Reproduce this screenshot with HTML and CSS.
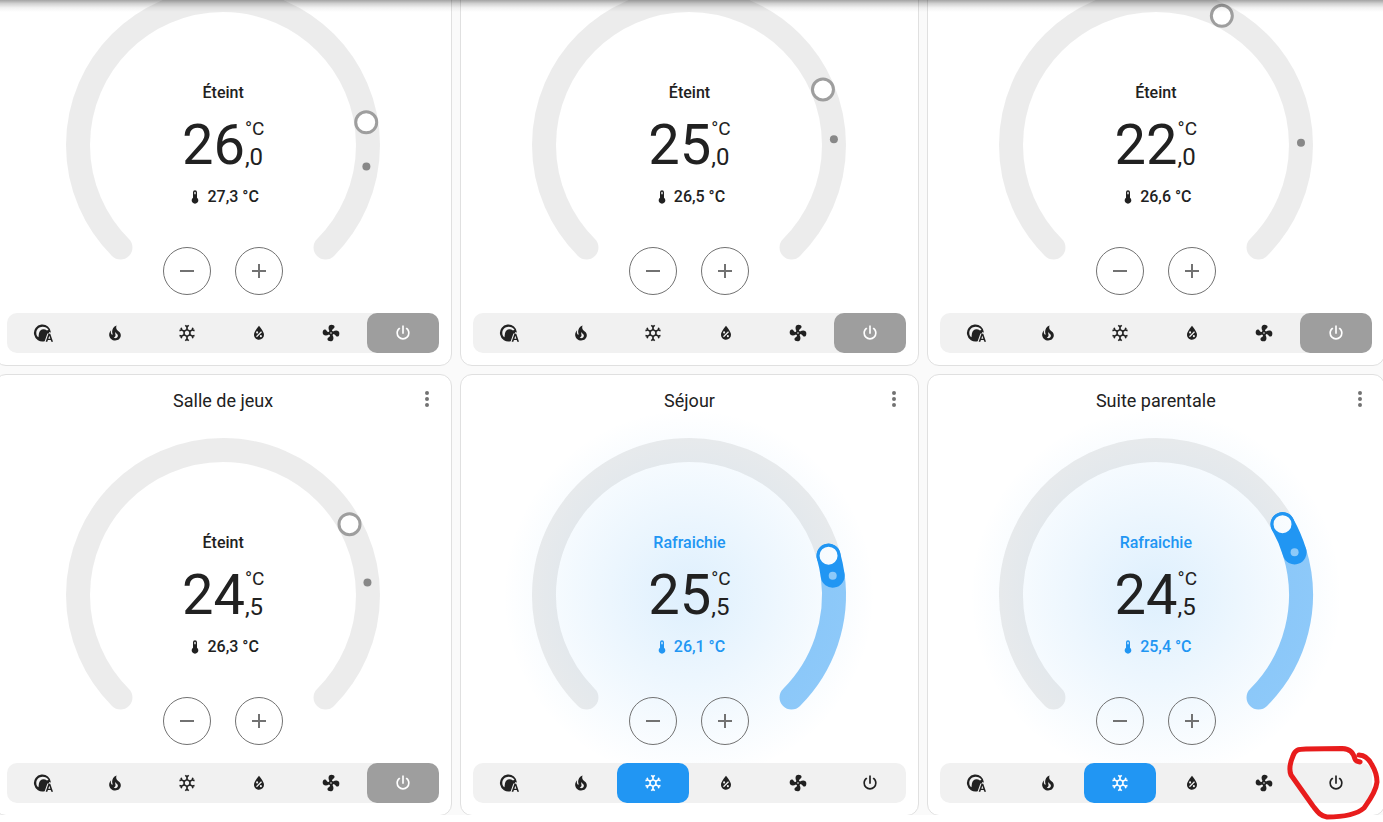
FILE: index.html
```html
<!DOCTYPE html>
<html lang="fr">
<head>
<meta charset="utf-8">
<title>Thermostats</title>
<link rel="stylesheet" href="styles.css">
</head>
<body>
<svg class="sprite" aria-hidden="true">
  <symbol id="auto" viewBox="0 0 24 24"><path fill-rule="evenodd" d="M21.500 11.500A10.200 10.200 0 1 0 14 21.800L17.300 12.500H19.500L19.300 10.800ZM5 16C2 10.500 5.800 4.600 11.500 4.600C14.500 4.600 17.200 6 18.600 8.200L16.800 9C14 7 10.800 7.200 8.900 9C7 11 7 13.500 6.600 17Z"/><path fill-rule="evenodd" d="M18.500 13H20.700L24 22.500H22L21.300 20.500H17.900L17.200 22.500H15.200ZM18.400 18.900H20.800L19.600 15.200Z"/></symbol>
  <symbol id="fire" viewBox="0 0 24 24"><path d="M17.66 11.2C17.43 10.9 17.15 10.64 16.89 10.38C16.22 9.78 15.46 9.35 14.82 8.72C13.33 7.26 13 4.85 13.95 3C13 3.23 12.17 3.75 11.46 4.32C8.87 6.4 7.85 10.07 9.07 13.22C9.11 13.32 9.15 13.42 9.15 13.55C9.15 13.77 9 13.97 8.8 14.05C8.57 14.15 8.33 14.09 8.14 13.93C8.08 13.88 8.04 13.83 8 13.76C6.87 12.33 6.69 10.28 7.45 8.64C5.78 10 4.87 12.3 5 14.47C5.06 14.97 5.12 15.47 5.29 15.97C5.43 16.57 5.7 17.17 6 17.7C7.08 19.43 8.95 20.67 10.96 20.92C13.1 21.19 15.39 20.8 17.03 19.32C18.86 17.66 19.5 15 18.56 12.72L18.43 12.46C18.22 12 17.66 11.2 17.66 11.2M14.5 17.5C14.22 17.74 13.76 18 13.4 18.1C12.28 18.5 11.16 17.94 10.5 17.28C11.69 17 12.4 16.12 12.61 15.23C12.78 14.43 12.46 13.77 12.33 13C12.21 12.26 12.23 11.63 12.5 10.94C12.69 11.32 12.89 11.7 13.13 12C13.9 13 15.11 13.44 15.37 14.8C15.41 14.94 15.43 15.08 15.43 15.23C15.46 16.05 15.1 16.95 14.5 17.5Z"/></symbol>
  <symbol id="snow" viewBox="0 0 24 24"><path d="M20.79,13.95L18.46,14.57L16.46,13.44V10.56L18.46,9.43L20.79,10.05L21.31,8.12L19.54,7.65L20,5.88L18.07,5.36L17.45,7.69L15.45,8.82L13,7.38V5.12L14.71,3.41L13.29,2L12,3.29L10.71,2L9.29,3.41L11,5.12V7.38L8.5,8.82L6.5,7.69L5.92,5.36L4,5.88L4.47,7.65L2.7,8.12L3.22,10.05L5.55,9.43L7.55,10.56V13.45L5.55,14.58L3.22,13.96L2.7,15.89L4.47,16.36L4,18.12L5.93,18.64L6.55,16.31L8.55,15.18L11,16.62V18.88L9.29,20.59L10.71,22L12,20.71L13.29,22L14.7,20.59L13,18.88V16.62L15.5,15.17L17.5,16.3L18.12,18.63L20,18.12L19.53,16.35L21.3,15.88L20.79,13.95M9.5,10.56L12,9.11L14.5,10.56V13.44L12,14.89L9.5,13.44V10.56Z"/></symbol>
  <symbol id="dry" viewBox="0 0 24 24"><path d="M12,3.25C12,3.25 6,10 6,14C6,17.32 8.69,20 12,20A6,6 0 0,0 18,14C18,10 12,3.25 12,3.25M14.47,9.97L15.53,11.03L9.53,17.03L8.47,15.97M9.75,10A1.25,1.25 0 0,1 11,11.25A1.25,1.25 0 0,1 9.75,12.5A1.25,1.25 0 0,1 8.5,11.25A1.25,1.25 0 0,1 9.75,10M14.25,14.5A1.25,1.25 0 0,1 15.5,15.75A1.25,1.25 0 0,1 14.25,17A1.25,1.25 0 0,1 13,15.75A1.25,1.25 0 0,1 14.25,14.5Z" fill-rule="evenodd"/></symbol>
  <symbol id="fan" viewBox="0 0 24 24"><path fill-rule="evenodd" d="M12,11A1,1 0 0,0 11,12A1,1 0 0,0 12,13A1,1 0 0,0 13,12A1,1 0 0,0 12,11M12.5,2C17,2 17.11,5.57 14.75,6.75C13.76,7.24 13.32,8.29 13.13,9.22C13.61,9.42 14.03,9.73 14.35,10.13C18.05,8.13 22.03,8.92 22.03,12.5C22.03,17 18.46,17.1 17.28,14.73C16.78,13.74 15.72,13.3 14.79,13.11C14.59,13.59 14.28,14 13.88,14.34C15.87,18.03 15.08,22 11.5,22C7,22 6.91,18.42 9.27,17.24C10.25,16.75 10.69,15.71 10.89,14.79C10.4,14.59 9.97,14.27 9.65,13.87C5.96,15.85 2,15.07 2,11.5C2,7 5.56,6.89 6.74,9.26C7.24,10.25 8.29,10.68 9.22,10.87C9.41,10.39 9.73,9.97 10.14,9.65C8.15,5.96 8.94,2 12.5,2Z"/></symbol>
  <symbol id="power" viewBox="0 0 24 24"><path d="M16.56,5.44L15.11,6.89C16.84,7.94 18,9.83 18,12A6,6 0 0,1 12,18A6,6 0 0,1 6,12C6,9.83 7.16,7.94 8.88,6.88L7.44,5.44C5.36,6.88 4,9.28 4,12A8,8 0 0,0 12,20A8,8 0 0,0 20,12C20,9.28 18.64,6.88 16.56,5.44M13,3H11V13H13"/></symbol>
  <symbol id="thermo" viewBox="0 0 24 24"><path fill-rule="evenodd" d="M15 13V5A3 3 0 0 0 9 5V13A5 5 0 1 0 15 13M12 4A1 1 0 0 1 13 5V8H11V5A1 1 0 0 1 12 4Z"/></symbol>
  <symbol id="minus" viewBox="0 0 24 24"><path d="M19,13H5V11H19V13Z"/></symbol>
  <symbol id="plus" viewBox="0 0 24 24"><path d="M19,13H13V19H11V13H5V11H11V5H13V11H19V13Z"/></symbol>
  <symbol id="dots" viewBox="0 0 24 24"><path d="M12,16A2,2 0 0,1 14,18A2,2 0 0,1 12,20A2,2 0 0,1 10,18A2,2 0 0,1 12,16M12,10A2,2 0 0,1 14,12A2,2 0 0,1 12,14A2,2 0 0,1 10,12A2,2 0 0,1 12,10M12,4A2,2 0 0,1 14,6A2,2 0 0,1 12,8A2,2 0 0,1 10,6A2,2 0 0,1 12,4Z"/></symbol>
</svg>
<div class="page">
  <main class="view">
    <div class="cards" id="cards"></div>
  </main>
  <svg class="annotation" viewBox="0 0 113 87" aria-hidden="true"><path d="M89 20C94 20 99 24 102 30C105 35 107 40 107 47C106 57 99 66 94 73C85 81 67 82 57 82C50 81 47 76 43 71L21 40C19 35 20 28 23 21C25 15 28 14 36 14L72 13.500C80 14 83 17 85 24C86 27 88 26 90 27"/></svg>
</div>
<script src="app.js"></script>
</body>
</html>
```
FILE: styles.css
```css
* { box-sizing: border-box; }
body { margin: 0; background: #fff; color: #212121; font-family: Roboto, "Noto Sans", sans-serif; }
button { font: inherit; color: inherit; background: none; border: 0; padding: 0; margin: 0; display: grid; place-items: center; }
.sprite { display: none; }
.page { position: relative; padding-bottom: 7px; }
.view { position: relative; overflow: hidden; background: #fafafa; }
.view::before { content: ""; position: absolute; z-index: 2; top: 0; left: 0; right: 0; height: 12px; background: linear-gradient(rgba(0,0,0,.36), rgba(0,0,0,.18) 30%, rgba(0,0,0,.05) 65%, rgba(0,0,0,0)); }
.cards { display: grid; grid-template-columns: repeat(3, 1fr); gap: 8px; margin: -76px -2px -1px -6px; }
.card { display: flex; flex-direction: column; background: #fff; border: 1px solid #e0e0e0; border-radius: 12px; padding: 0 12px 12px; --tone: #9e9e9e; }
.head { display: grid; grid-template-columns: 36px 1fr 36px; align-items: start; height: 60px; margin: 0 -6px; }
.title { grid-column: 2; margin: 0; padding-top: 12px; font-size: 18px; line-height: 28px; font-weight: 400; text-align: center; }
.menu { width: 36px; height: 48px; fill: #727272; }
.menu svg { width: 24px; height: 24px; }
.dial { display: grid; justify-items: center; margin-bottom: 8px; }
.dial > * { grid-area: 1 / 1; }
.ring { width: 320px; height: 320px; fill: none; stroke-width: 24; stroke-linecap: round; overflow: visible; }
.track { stroke: #9e9e9e; stroke-opacity: .2; }
.range { stroke: #2196f3; stroke-opacity: .5; }
.active { stroke: #2196f3; }
.knob { fill: #fff; stroke: var(--tone); stroke-width: 3; }
.now { fill: #888; stroke: none; }
.cool { --tone: #2196f3; }
.cool .now { fill: #fff; fill-opacity: .5; }
.glow { width: 372px; height: 372px; margin: -26px 0; border-radius: 50%; background: radial-gradient(closest-side, #2196f3, transparent); opacity: 0; }
.cool .glow { opacity: .15; }
.info { z-index: 1; display: flex; flex-direction: column; align-items: center; padding-top: 96px; }
.state { margin: 0; font-size: 16px; line-height: 24px; font-weight: 500; }
.target { display: flex; margin: 12px 0; font-size: 56px; line-height: 56px; }
.side { display: flex; flex-direction: column; justify-content: center; }
.unit { font-size: 19px; line-height: 24px; }
.dec { font-size: 24px; line-height: 32px; }
.current { display: flex; align-items: center; gap: 4px; margin: 0; font-size: 16px; line-height: 24px; font-weight: 500; }
.current svg { width: 16px; height: 16px; fill: currentColor; }
.cool .state, .cool .current { color: #2196f3; }
.steps { display: flex; gap: 24px; margin-top: 38px; }
.step { width: 48px; height: 48px; border: 1px solid #727272; border-radius: 50%; fill: #727272; }
.step svg { width: 24px; height: 24px; }
.modes { position: relative; display: grid; grid-template-columns: repeat(6, 1fr); height: 40px; border-radius: 10px; background: #f1f1f1; }
.mode { border-radius: 10px; fill: #212121; }
.mode svg { width: 20px; height: 20px; }
.mode.on { background: var(--tone); fill: #fff; }
.annotation { position: absolute; z-index: 3; right: 0; bottom: 0; width: 113px; height: 87px; fill: none; stroke: #e81c1c; stroke-width: 5; stroke-linecap: round; stroke-linejoin: round; }
```
FILE: app.js
```js
const MIN = 10, MAX = 30, R = 145;
const zones = [
  { name: "", target: 26, current: 27.3 },
  { name: "", target: 25, current: 26.5 },
  { name: "", target: 22, current: 26.6 },
  { name: "Salle de jeux", target: 24.5, current: 26.3 },
  { name: "Séjour", target: 25.5, current: 26.1, cool: true },
  { name: "Suite parentale", target: 24.5, current: 25.4, cool: true }
];
const modes = [["auto", "Automatique"], ["fire", "Chauffage"], ["snow", "Climatisation"], ["dry", "Déshumidification"], ["fan", "Ventilation"], ["power", "Éteint"]];
const icon = id => `<svg aria-hidden="true"><use href="#${id}"/></svg>`;
const angle = t => 135 + (t - MIN) / (MAX - MIN) * 270;
const point = t => {
  const a = angle(t) * Math.PI / 180;
  return [R * Math.cos(a), R * Math.sin(a)];
};
const arc = (from, to, cls) =>
  `<path class="${cls}" d="M${point(from)}A${R} ${R} 0 ${angle(to) - angle(from) > 180 ? 1 : 0} 1 ${point(to)}"/>`;
const dot = (t, r, cls) => {
  const [x, y] = point(t);
  return `<circle class="${cls}" cx="${x}" cy="${y}" r="${r}"/>`;
};

document.getElementById("cards").innerHTML = zones.map(z => {
  const [whole, dec] = z.target.toFixed(1).split(".");
  const selected = z.cool ? "snow" : "power";
  return `<section class="card${z.cool ? " cool" : ""}">
    <header class="head">${z.name ? `<h2 class="title">${z.name}</h2><button class="menu" aria-label="Plus d'infos">${icon("dots")}</button>` : ""}</header>
    <div class="dial">
      <div class="glow"></div>
      <svg class="ring" viewBox="-160 -160 320 320" aria-hidden="true">
        ${z.cool ? arc(MIN, z.target, "track") + arc(z.current, MAX, "range") + arc(z.target, z.current, "active") : arc(MIN, MAX, "track")}
        ${dot(z.current, 4, "now")}${dot(z.target, 10.5, "knob")}
      </svg>
      <div class="info">
        <p class="state">${z.cool ? "Rafraichie" : "Éteint"}</p>
        <div class="target"><span>${whole}</span><span class="side"><span class="unit">°C</span><span class="dec">,${dec}</span></span></div>
        <p class="current">${icon("thermo")}<span>${z.current.toFixed(1).replace(".", ",")} °C</span></p>
        <div class="steps"><button class="step" aria-label="Diminuer">${icon("minus")}</button><button class="step" aria-label="Augmenter">${icon("plus")}</button></div>
      </div>
    </div>
    <div class="modes">${modes.map(([id, label]) => `<button class="mode${id === selected ? " on" : ""}" aria-label="${label}">${icon(id)}</button>`).join("")}</div>
  </section>`;
}).join("");
```
